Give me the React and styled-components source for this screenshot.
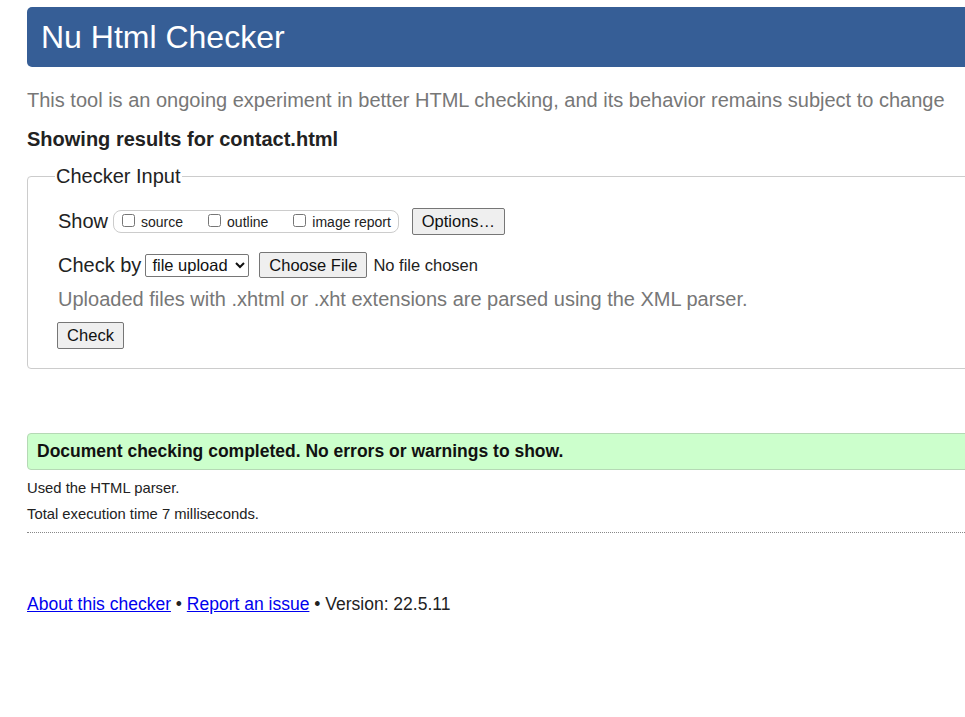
import React from 'react'
import styled, { createGlobalStyle } from 'styled-components'

const Global = createGlobalStyle`
html, body {
  margin: 0;
  padding: 0;
  overflow: hidden;
  background: #fff;
}
body {
  font-family: "Liberation Sans", Arial, sans-serif;
  color: #222;
}
`

export default function App() {
  return (
    <>
      <Global />
      <Page>
        <Header>
          <h1>Nu Html Checker</h1>
        </Header>
        <Intro>This tool is an ongoing experiment in better HTML checking, and its behavior remains subject to change</Intro>
        <Results>Showing results for contact.html</Results>

        <Fieldset>
          <legend>Checker Input</legend>
          <Row>
            <RowLabel gap={5}>Show</RowLabel>
            <Pill>
              <Check><input type="checkbox" />source</Check>
              <Check><input type="checkbox" />outline</Check>
              <Check last><input type="checkbox" />image report</Check>
            </Pill>
            <Button w={93} h={27} ml={13}>Options…</Button>
          </Row>
          <Row mt={17}>
            <RowLabel gap={4}>Check by</RowLabel>
            <Select defaultValue="file">
              <option value="file">file upload</option>
            </Select>
            <Button w={108} h={26} ml={10}>Choose File</Button>
            <NoFile>No file chosen</NoFile>
          </Row>
          <Help>Uploaded files with .xhtml or .xht extensions are parsed using the XML parser.</Help>
          <Button w={67} h={27} ml={-1}>Check</Button>
        </Fieldset>

        <Success>Document checking completed. No errors or warnings to show.</Success>
        <Detail mt={10}>Used the HTML parser.</Detail>
        <Detail mt={10}>Total execution time 7 milliseconds.</Detail>
        <Rule />

        <Footer>
          <a href="#about">About this checker</a> • <a href="#issue">Report an issue</a> • Version: 22.5.11
        </Footer>
      </Page>
    </>
  )
}

const Page = styled.div`
width: 1100px;
padding: 7px 0 0 27px;
display: flex;
flex-direction: column;
align-items: stretch;
`

const Header = styled.div`
height: 60px;
background-color: #365e96;
border-radius: 5px 0 0 5px;
display: flex;
align-items: center;
padding-left: 14px;

h1{
  margin: 0;
  font-size: 32px;
  font-weight: normal;
  color: #fff;
  line-height: 1;
  padding-bottom: 1px;
}
`

const Intro = styled.p`
margin: 22px 0 0 0;
font-size: 20px;
line-height: 23px;
color: #777;
`

const Results = styled.h2`
margin: 16px 0 0 0;
font-size: 20px;
line-height: 23px;
font-weight: bold;
color: #222;
`

const Fieldset = styled.fieldset`
margin: 14px 0 0 0;
padding: 20px 0 19px 30px;
border: 1px solid #ccc;
border-radius: 4px;
display: flex;
flex-direction: column;
align-items: flex-start;

legend{
  font-size: 20px;
  line-height: 23px;
  padding: 0 1px;
  margin-left: -3px;
  color: #222;
}
`

const Row = styled.div`
display: flex;
align-items: center;
margin-top: ${p => (p.mt || 0)}px;
`

const RowLabel = styled.span`
font-size: 20px;
line-height: 23px;
color: #222;
margin-right: ${p => p.gap}px;
`

const Pill = styled.div`
display: flex;
align-items: center;
height: 23px;
box-sizing: border-box;
border: 1px solid #ccc;
border-radius: 8px;
padding: 0 7px 0 8px;
`

const Check = styled.label`
display: flex;
align-items: center;
font-size: 14px;
color: #222;
margin-right: ${p => (p.last ? 0 : 25)}px;
padding-top: 1px;

input{
  width: 13px;
  height: 13px;
  margin: 0 6px 4px 0;
}
`

const Button = styled.button`
width: ${p => p.w}px;
height: ${p => p.h}px;
margin-left: ${p => p.ml || 0}px;
padding: 0;
font-family: "Liberation Sans", Arial, sans-serif;
font-size: 16.5px;
color: #111;
background: #efefef;
border: 1px solid #767676;
border-radius: 2px;
`

const Select = styled.select`
width: 104px;
height: 23px;
font-family: "Liberation Sans", Arial, sans-serif;
font-size: 16.5px;
color: #111;
background: #fff;
border: 1px solid #767676;
border-radius: 2px;
padding: 0 0 0 2px;
`

const NoFile = styled.span`
font-size: 16.5px;
color: #222;
margin-left: 6px;
`

const Help = styled.p`
margin: 10px 0 11px 0;
font-size: 20px;
line-height: 23px;
color: #777;
`

const Success = styled.div`
margin-top: 64px;
height: 37px;
box-sizing: border-box;
background: #ccffcc;
border: 1px solid #b5d9b5;
border-radius: 4px 0 0 4px;
padding-left: 9px;
display: flex;
align-items: center;
font-size: 17.5px;
font-weight: bold;
color: #111;
`

const Detail = styled.p`
margin: ${p => p.mt}px 0 0 0;
font-size: 14.8px;
line-height: 16px;
color: #222;
`

const Rule = styled.hr`
margin: 10px 0 0 0;
border: none;
border-top: 1px dotted #888;
height: 0;
width: 100%;
`

const Footer = styled.p`
margin: 61px 0 0 0;
font-size: 17.5px;
line-height: 20px;
color: #222;

a{
  color: #0000ee;
  text-decoration: underline;
}
`
